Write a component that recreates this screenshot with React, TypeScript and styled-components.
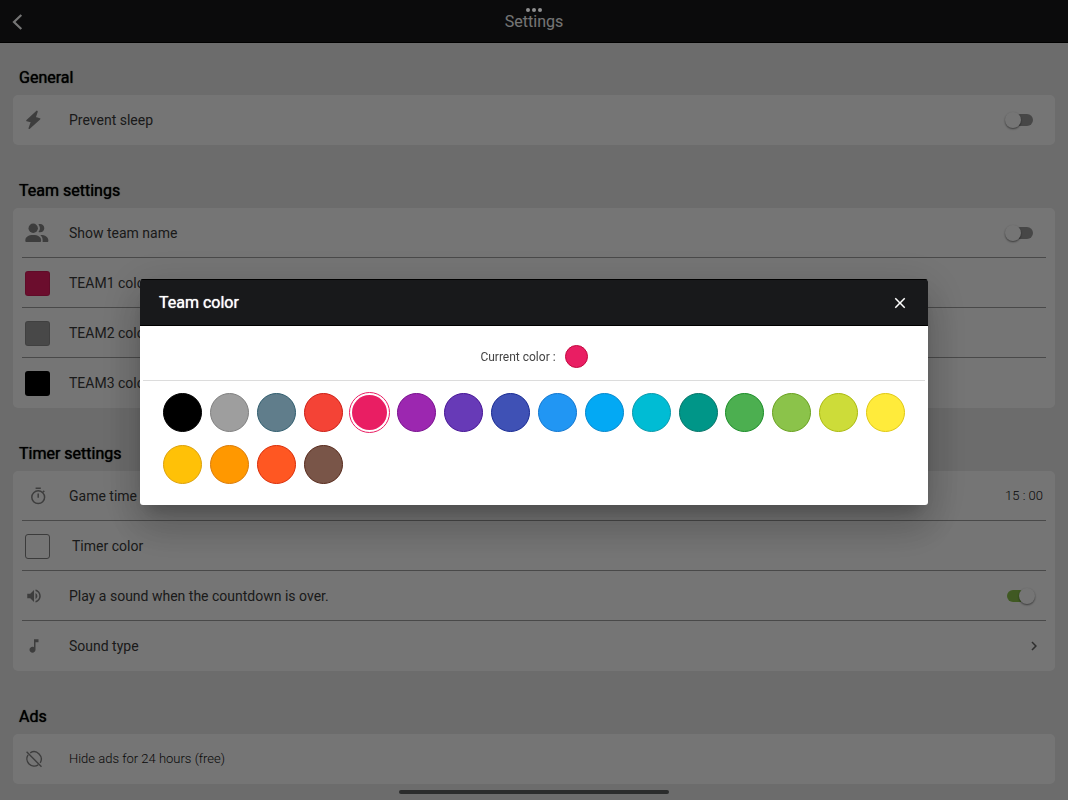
import React, { useState } from "react";
import styled, { createGlobalStyle, css } from "styled-components";
import { MdChevronRight, MdClose, MdMusicNote, MdVolumeUp } from "react-icons/md";

const GlobalStyle = createGlobalStyle`
  *, *::before, *::after { box-sizing: border-box; }
  body {
    margin: 0;
    background: #ebebeb;
    color: #303030;
    font-family: Roboto, "Liberation Sans", sans-serif;
    font-size: 14px;
  }
  button {
    font: inherit;
    color: inherit;
    background: none;
    border: 0;
    padding: 0;
    text-align: left;
    cursor: pointer;
  }
`;

/* ---------- page ---------- */

const Page = styled.div`
  min-height: 100vh;
  padding-bottom: 16px;
`;

const TopBar = styled.header`
  display: grid;
  grid-template-columns: 48px 1fr 48px;
  align-items: center;
  height: 43px;
  padding-top: 2px;
  background: #18191b;
  border-bottom: 1px solid #000;
  color: #fff;
`;

const BackButton = styled.button`
  display: flex;
  padding-left: 10px;
`;

const PageTitle = styled.h1`
  margin: 0;
  font-size: 16px;
  line-height: 24px;
  font-weight: 400;
  text-align: center;
`;

const Sections = styled.main`
  display: flex;
  flex-direction: column;
  gap: 34px;
  padding: 23px 13px 0;
`;

const SectionTitle = styled.h2`
  margin: 0 0 5px;
  padding-left: 6px;
  font-size: 16px;
  line-height: 24px;
  font-weight: 400;
  color: #000;
  text-shadow: 0 0 1px currentColor;
`;

const Card = styled.div`
  background: #fff;
  border-radius: 5px;
`;

const rowStyle = css<{ $small?: boolean }>`
  display: flex;
  align-items: center;
  width: 100%;
  height: 50px;
  padding: 0 12px;
  font-size: ${(p) => (p.$small ? 13 : 14)}px;
  font-weight: ${(p) => (p.$small ? 300 : 400)};
  line-height: 20px;
  color: ${(p) => (p.$small ? "#111" : "#3a3a3a")};
`;

const Row = styled.label<{ $small?: boolean }>`
  ${rowStyle}
`;

const RowButton = styled.button<{ $small?: boolean }>`
  ${rowStyle}
`;

const RowLine = styled.hr`
  height: 1px;
  margin: -1px 9px 0;
  border: 0;
  background: #a0a0a0;
`;

const Lead = styled.span<{ $wide?: boolean }>`
  display: flex;
  flex: none;
  width: ${(p) => (p.$wide ? 47 : 44)}px;
  color: #868686;
`;

const RowText = styled.span`
  flex: 1;
`;

const RowValue = styled.span`
  font-size: 13px;
  font-weight: 300;
  color: #111;
`;

const ColorChip = styled.span<{ $color: string; $outlined?: boolean }>`
  width: 25px;
  height: 25px;
  border-radius: 3px;
  background: ${(p) => p.$color};
  border: 1px solid ${(p) => (p.$outlined ? "#808080" : "rgba(0, 0, 0, 0.1)")};
`;

const Switch = styled.input`
  appearance: none;
  position: relative;
  width: 26px;
  height: 12px;
  margin: 0 10px 0 0;
  border-radius: 6px;
  background: #9c9c9c;

  &::after {
    content: "";
    position: absolute;
    top: -2px;
    left: -2px;
    width: 16px;
    height: 16px;
    border-radius: 50%;
    background: #fff;
    box-shadow: 0 1px 2px rgba(0, 0, 0, 0.5);
  }
  &:checked {
    background: #8bc34a;
  }
  &:checked::after {
    left: 12px;
  }
`;

/* ---------- dialog ---------- */

const Backdrop = styled.div`
  position: fixed;
  inset: 0;
  display: flex;
  align-items: center;
  justify-content: center;
  padding: 0 24px 16px;
  background: rgba(0, 0, 0, 0.54);
`;

const Dialog = styled.section`
  width: 100%;
  max-width: 788px;
  border-radius: 3px;
  overflow: hidden;
  background: #fff;
  box-shadow: 0 11px 15px -7px rgba(0, 0, 0, 0.2),
    0 24px 38px 3px rgba(0, 0, 0, 0.14), 0 9px 46px 8px rgba(0, 0, 0, 0.12);
`;

const DialogBar = styled.header`
  display: flex;
  align-items: center;
  justify-content: space-between;
  height: 47px;
  padding: 0 19px;
  background: #18191b;
  border: solid #000;
  border-width: 1px 0;
  color: #fff;
`;

const DialogTitle = styled.h2`
  margin: 0;
  padding-top: 1px;
  font-size: 16px;
  line-height: 24px;
  font-weight: 400;
  text-shadow: 0 0 1px currentColor;
`;

const CloseButton = styled.button`
  display: flex;
`;

const CurrentColor = styled.div`
  display: flex;
  align-items: center;
  justify-content: center;
  gap: 9px;
  height: 55px;
  margin: 0 3px;
  padding-top: 7px;
  border-bottom: 1px solid #dcdcdc;
  font-size: 12px;
  line-height: 16px;
  color: #444;
`;

const CurrentDot = styled.span<{ $fill: string; $edge: string }>`
  width: 23px;
  height: 23px;
  border-radius: 50%;
  background: ${(p) => p.$fill};
  border: 1px solid ${(p) => p.$edge};
`;

const Palette = styled.div`
  display: grid;
  grid-template-columns: repeat(16, 1fr);
  grid-auto-rows: 52px;
  place-items: center;
  padding: 5px 19px 15px;
`;

const Swatch = styled.input<{ $fill: string; $edge: string }>`
  appearance: none;
  width: 39px;
  height: 39px;
  margin: 0;
  border-radius: 50%;
  background: ${(p) => p.$fill};
  border: 1px solid ${(p) => p.$edge};
  cursor: pointer;

  &:checked {
    width: 41px;
    height: 41px;
    padding: 2px;
    border-color: ${(p) => p.$fill};
    background-clip: content-box;
  }
`;

/* ---------- system chrome ---------- */

const MoreDots = styled.div`
  position: fixed;
  top: 8px;
  left: 0;
  right: 0;
  display: flex;
  justify-content: center;
  gap: 2px;

  i {
    width: 4px;
    height: 4px;
    border-radius: 50%;
    background: #8f8f8f;
  }
`;

const HomeIndicator = styled.div`
  position: fixed;
  bottom: 6px;
  left: 50%;
  width: 270px;
  height: 4px;
  margin-left: -135px;
  border-radius: 2px;
  background: #2b2c2c;
`;

/* ---------- icons ---------- */

const BackIcon = () => (
  <svg width="14" height="18" viewBox="0 0 14 18" fill="none" stroke="currentColor" strokeWidth="2.2">
    <path d="M11.3 2 4 9l7.300 7" />
  </svg>
);

const BoltIcon = () => (
  <svg width="18" height="20" viewBox="0 0 18 20" fill="currentColor" stroke="currentColor" strokeWidth="1.600" strokeLinejoin="round">
    <path d="M12 1.400 2 10.600 6.600 11.800 4.300 18.200 14.600 8.900 10 7.600Z" />
  </svg>
);

const PeopleIcon = () => (
  <svg width="24" height="20" viewBox="0 0 24 20" fill="currentColor">
    <circle cx="8.200" cy="5.200" r="4.700" />
    <path d="M.3 17.500c0-3.600 3-5.500 7.900-5.500s7.900 1.900 7.900 5.500c0 1-.4 1.500-1.300 1.500H1.600C.7 19 .3 18.500.3 17.500z" />
    <path d="M13.300 1.500c.7-.3 1.200-.4 1.900-.4 2.300 0 4.100 1.800 4.100 4.100s-1.800 4.100-4.100 4.100c-.7 0-1.300-.1-1.900-.4 1-1 1.600-2.300 1.600-3.700s-.6-2.700-1.600-3.700z" />
    <path d="M15.300 12.100c4.700-.1 8.100 1.700 8.100 5.600 0 .9-.4 1.300-1.200 1.300h-4.600c.3-2.600-.2-5.200-2.300-6.900z" />
  </svg>
);

const StopwatchIcon = () => (
  <svg width="26" height="20" viewBox="0 0 26 20" fill="none" stroke="currentColor" strokeWidth="1.500">
    <circle cx="13.200" cy="11.200" r="6.400" />
    <path d="M10.600 2.300h5.200M13.200 7.500v4.200M17.800 6.300l1.500-1.400" />
  </svg>
);

const AdsOffIcon = () => (
  <svg width="18" height="18" viewBox="0 0 18 18" fill="none" stroke="currentColor" strokeWidth="1.400">
    <path d="M5.200 2.800A7.300 7.300 0 0 1 15.200 12.800M13.200 14.900A7.300 7.300 0 0 1 3.100 4.800M1.600 1.800l14.900 15" />
  </svg>
);

/* ---------- data ---------- */

const COLORS = [
  { name: "Black", fill: "#000000", edge: "#000000" },
  { name: "Gray", fill: "#9e9e9e", edge: "#808080" },
  { name: "Blue gray", fill: "#607d8b", edge: "#305d6e" },
  { name: "Red", fill: "#f44336", edge: "#cc1d14" },
  { name: "Pink", fill: "#e91e63", edge: "#c2083f" },
  { name: "Purple", fill: "#9c27b0", edge: "#780f8e" },
  { name: "Deep purple", fill: "#673ab7", edge: "#451395" },
  { name: "Indigo", fill: "#3f51b5", edge: "#182a93" },
  { name: "Blue", fill: "#2196f3", edge: "#1176cf" },
  { name: "Light blue", fill: "#03a9f4", edge: "#0587cc" },
  { name: "Cyan", fill: "#00bcd4", edge: "#0899ab" },
  { name: "Teal", fill: "#009688", edge: "#067468" },
  { name: "Green", fill: "#4caf50", edge: "#198c26" },
  { name: "Light green", fill: "#8bc34a", edge: "#68a01e" },
  { name: "Lime", fill: "#cddc39", edge: "#aab90f" },
  { name: "Yellow", fill: "#ffeb3b", edge: "#dfc812" },
  { name: "Amber", fill: "#ffc107", edge: "#dba00b" },
  { name: "Orange", fill: "#ff9800", edge: "#da7b08" },
  { name: "Deep orange", fill: "#ff5722", edge: "#da2d08" },
  { name: "Brown", fill: "#795548", edge: "#572a1c" },
];

export default function App() {
  const [open, setOpen] = useState(true);
  const [picked, setPicked] = useState(4);
  const current = COLORS[picked];

  return (
    <>
      <GlobalStyle />
      <Page>
        <TopBar>
          <BackButton type="button" aria-label="Back">
            <BackIcon />
          </BackButton>
          <PageTitle>Settings</PageTitle>
        </TopBar>

        <Sections>
          <section>
            <SectionTitle>General</SectionTitle>
            <Card>
              <Row>
                <Lead><BoltIcon /></Lead>
                <RowText>Prevent sleep</RowText>
                <Switch type="checkbox" />
              </Row>
            </Card>
          </section>

          <section>
            <SectionTitle>Team settings</SectionTitle>
            <Card>
              <Row>
                <Lead><PeopleIcon /></Lead>
                <RowText>Show team name</RowText>
                <Switch type="checkbox" />
              </Row>
              <RowLine />
              <RowButton type="button" onClick={() => setOpen(true)}>
                <Lead><ColorChip $color={current.fill} /></Lead>
                <RowText>TEAM1 color</RowText>
              </RowButton>
              <RowLine />
              <RowButton type="button">
                <Lead><ColorChip $color="#9e9e9e" /></Lead>
                <RowText>TEAM2 color</RowText>
              </RowButton>
              <RowLine />
              <RowButton type="button">
                <Lead><ColorChip $color="#000" /></Lead>
                <RowText>TEAM3 color</RowText>
              </RowButton>
            </Card>
          </section>

          <section>
            <SectionTitle>Timer settings</SectionTitle>
            <Card>
              <RowButton type="button">
                <Lead><StopwatchIcon /></Lead>
                <RowText>Game time</RowText>
                <RowValue>15 : 00</RowValue>
              </RowButton>
              <RowLine />
              <RowButton type="button">
                <Lead $wide><ColorChip $color="#fff" $outlined /></Lead>
                <RowText>Timer color</RowText>
              </RowButton>
              <RowLine />
              <Row>
                <Lead><MdVolumeUp size={18} /></Lead>
                <RowText>Play a sound when the countdown is over.</RowText>
                <Switch type="checkbox" defaultChecked />
              </Row>
              <RowLine />
              <RowButton type="button">
                <Lead><MdMusicNote size={18} /></Lead>
                <RowText>Sound type</RowText>
                <MdChevronRight size={18} color="#666" />
              </RowButton>
            </Card>
          </section>

          <section>
            <SectionTitle>Ads</SectionTitle>
            <Card>
              <RowButton type="button" $small>
                <Lead><AdsOffIcon /></Lead>
                <RowText>Hide ads for 24 hours (free)</RowText>
              </RowButton>
            </Card>
          </section>
        </Sections>
      </Page>

      {open && (
        <Backdrop>
          <Dialog role="dialog" aria-modal="true" aria-labelledby="team-color-title">
            <DialogBar>
              <DialogTitle id="team-color-title">Team color</DialogTitle>
              <CloseButton type="button" aria-label="Close" onClick={() => setOpen(false)}>
                <MdClose size={18} />
              </CloseButton>
            </DialogBar>
            <CurrentColor>
              <span>Current color :</span>
              <CurrentDot $fill={current.fill} $edge={current.edge} />
            </CurrentColor>
            <Palette role="radiogroup" aria-labelledby="team-color-title">
              {COLORS.map((c, i) => (
                <Swatch
                  key={c.name}
                  type="radio"
                  name="team-color"
                  aria-label={c.name}
                  checked={i === picked}
                  onChange={() => setPicked(i)}
                  $fill={c.fill}
                  $edge={c.edge}
                />
              ))}
            </Palette>
          </Dialog>
        </Backdrop>
      )}

      <MoreDots aria-hidden="true"><i /><i /><i /></MoreDots>
      <HomeIndicator aria-hidden="true" />
    </>
  );
}
